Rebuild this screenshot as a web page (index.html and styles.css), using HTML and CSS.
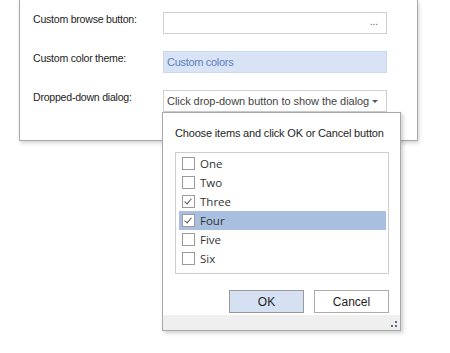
FILE: index.html
```html
<!DOCTYPE html>
<html lang="en">
<head>
    <meta charset="UTF-8">
    <title>Dropped-down dialog</title>
    <link rel="stylesheet" href="styles.css">
</head>
<body>
    <div class="window">
        <div class="form">
            <div class="label">Custom browse button:</div>
            <div class="field browse">
                <span class="dots">...</span>
            </div>

            <div class="label">Custom color theme:</div>
            <div class="field themed">Custom colors</div>

            <div class="label">Dropped-down dialog:</div>
            <div class="field combo">
                <span>Click drop-down button to show the dialog</span>
                <span class="arrow"></span>
            </div>
        </div>
    </div>

    <!-- the dialog hangs under the combo box -->
    <div class="popup">
        <div class="popup-body">
            <div class="caption">Choose items and click OK or Cancel button</div>
            <div class="list">
                <div class="item"><span class="check"></span>One</div>
                <div class="item"><span class="check"></span>Two</div>
                <div class="item"><span class="check on"></span>Three</div>
                <div class="item selected"><span class="check on"></span>Four</div>
                <div class="item"><span class="check"></span>Five</div>
                <div class="item"><span class="check"></span>Six</div>
            </div>
            <div class="buttons">
                <button class="btn default">OK</button>
                <button class="btn">Cancel</button>
            </div>
        </div>
        <div class="grip-bar">
            <svg class="grip" width="6" height="6" viewBox="0 0 6 6">
                <rect x="4" y="0" width="2" height="2" fill="#5a6a80"/>
                <rect x="0" y="4" width="2" height="2" fill="#5a6a80"/>
                <rect x="4" y="4" width="2" height="2" fill="#5a6a80"/>
            </svg>
        </div>
    </div>
</body>
</html>
```

FILE: styles.css
```css
body {
    margin: 0;
    width: 450px;
    height: 353px;
    position: relative;
    overflow: hidden;
    background: #fff;
    font-family: "Liberation Sans", Arial, sans-serif;
    font-size: 11px;
    color: #1e1e1e;
    white-space: nowrap;
}

.window {
    margin-left: 19px;
    width: 397px;
    height: 140px;
    border: 1px solid #a8a8a8;
    border-top: none;
    background: #fff;
    box-shadow: 1px 2px 4px rgba(0, 0, 0, 0.18);
}

.form {
    display: grid;
    grid-template-columns: 130px 224px;
    row-gap: 17px;
    padding: 12px 0 0 13px;
}

.label {
    line-height: 15px;
    font-size: 10.6px;
    letter-spacing: -0.25px;
}

.field {
    box-sizing: border-box;
    height: 22px;
    border: 1px solid #cfcfcf;
    display: flex;
    align-items: center;
    padding: 0 3px;
    color: #444;
}

.browse {
    justify-content: flex-end;
}

.dots {
    color: #666;
    font-size: 10px;
    padding-right: 5px;
    padding-bottom: 3px;
}

.themed {
    background: #d8e3f5;
    border-color: #cad8ef;
    color: #5b7fbd;
    letter-spacing: -0.3px;
}

.combo {
    justify-content: space-between;
    padding-right: 8px;
    letter-spacing: -0.05px;
}

.arrow {
    width: 0;
    height: 0;
    border-left: 3px solid transparent;
    border-right: 3px solid transparent;
    border-top: 3px solid #555;
}

.popup {
    position: absolute;
    left: 162px;
    top: 112px;
    width: 237px;
    height: 217px;
    border: 1px solid #a8a8a8;
    background: #fff;
    box-shadow: 2px 2px 4px rgba(0, 0, 0, 0.2);
    display: flex;
    flex-direction: column;
}

.popup-body {
    flex: 1;
    padding: 12px 11px 0 12px;
}

.caption {
    line-height: 16px;
    color: #1e1e1e;
    letter-spacing: -0.17px;
}

.list {
    margin-top: 11px;
    height: 119px;
    border: 1px solid #cdcdcd;
    padding: 1px 2px 0 3px;
}

.item {
    height: 19px;
    display: flex;
    align-items: center;
    padding-left: 3px;
    color: #333;
    font-family: "Open Sans", "Liberation Sans", sans-serif;
    font-size: 11.5px;
}

.item.selected {
    background: #a9bfe0;
}

.check {
    box-sizing: border-box;
    width: 13px;
    height: 13px;
    border: 1px solid #9a9a9a;
    background: #fff;
    margin-right: 5px;
    position: relative;
}

.check.on::after {
    content: "";
    position: absolute;
    left: 3px;
    top: 1px;
    width: 3px;
    height: 6px;
    border-right: 1px solid #555;
    border-bottom: 1px solid #555;
    transform: rotate(40deg);
}

.buttons {
    display: flex;
    justify-content: flex-end;
    gap: 10px;
    margin-top: 16px;
}

.btn {
    box-sizing: border-box;
    width: 75px;
    height: 23px;
    border: 1px solid #adadad;
    background: #fff;
    font: inherit;
    font-size: 12px;
    color: #1e1e1e;
    padding: 0;
}

.btn.default {
    background: #d5e1f3;
    border-color: #9a9a9a;
}

.grip-bar {
    height: 12px;
    background: #efefef;
    display: flex;
    justify-content: flex-end;
    align-items: flex-end;
    padding: 0 3px 3px 0;
}
```
